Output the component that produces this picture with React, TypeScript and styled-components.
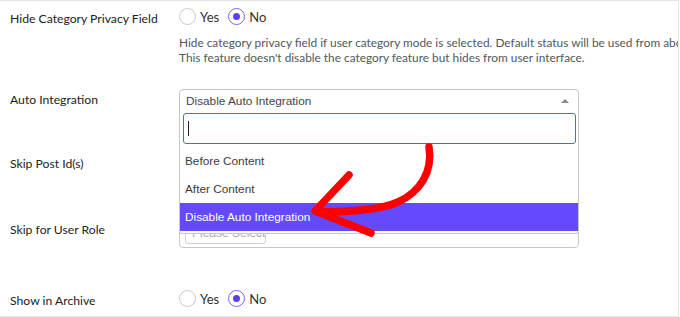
import * as React from 'react';
import styled, { createGlobalStyle } from 'styled-components';

const GlobalStyle = createGlobalStyle`
  html, body {
    margin: 0;
    padding: 0;
    background: #fff;
  }
  * {
    box-sizing: border-box;
  }
`;

const Panel = styled.div`
  position: relative;
  width: 679px;
  overflow: hidden;
  background: #fff;
  border-top: 1px solid #e4e4e4;
  border-right: 1px solid #e4e4e4;
  border-bottom: 1px solid #e4e4e4;
  font-family: Lato, 'Open Sans', sans-serif;
  color: #2c2c2c;
`;

const Row = styled.div<{ $height: number; $top: number }>`
  display: grid;
  grid-template-columns: 169px 1fr;
  align-items: start;
  height: ${(p) => p.$height}px;
  padding: ${(p) => p.$top}px 0 0 10px;
`;

const Label = styled.div<{ $offset?: number }>`
  font-size: 12.2px;
  line-height: 22px;
  padding-top: ${(p) => p.$offset || 0}px;
  color: #222;
  white-space: nowrap;
`;

const Field = styled.div`
  position: relative;
  width: 400px;
`;

const RadioGroup = styled.div`
  display: flex;
  align-items: center;
  gap: 4px;
  height: 17px;
  font-size: 13px;
  color: #333;
`;

const RadioOption = styled.label`
  display: flex;
  align-items: center;
  gap: 4px;
  margin-right: 5px;
`;

const RadioCircle = styled.span<{ $checked?: boolean }>`
  display: inline-flex;
  align-items: center;
  justify-content: center;
  width: 17px;
  height: 17px;
  border-radius: 50%;
  border: 1px solid ${(p) => (p.$checked ? '#7b63f5' : '#c9c9c9')};
  background: #fff;

  &::after {
    content: '';
    display: ${(p) => (p.$checked ? 'block' : 'none')};
    width: 7px;
    height: 7px;
    border-radius: 50%;
    background: #5b3ff0;
  }
`;

const Description = styled.p`
  margin: 10px 0 0;
  width: 500px;
  font-size: 11.85px;
  line-height: 15px;
  color: #50575e;
  white-space: nowrap;
`;

const SelectBox = styled.div`
  display: flex;
  align-items: center;
  justify-content: space-between;
  width: 400px;
  height: 23px;
  padding: 0 9px 0 6px;
  border: 1px solid #c4c4c4;
  border-radius: 4px 4px 0 0;
  font-family: 'Liberation Sans', Arial, sans-serif;
  font-size: 11.8px;
  color: #444;
`;

const Caret = styled.span`
  width: 0;
  height: 0;
  border-left: 4px solid transparent;
  border-right: 4px solid transparent;
  border-bottom: 4px solid #888;
`;

const Dropdown = styled.div`
  position: absolute;
  top: 22px;
  left: 0;
  width: 400px;
  z-index: 5;
  background: #fff;
  border: 1px solid #c8c8c8;
  border-top: none;
  border-radius: 0 0 3px 3px;
  font-family: 'Liberation Sans', Arial, sans-serif;
  font-size: 11.8px;
`;

const SearchWrap = styled.div`
  padding: 2px 2px 3px 3px;
`;

const SearchInput = styled.div`
  display: flex;
  align-items: center;
  height: 31px;
  padding-left: 4px;
  border: 1px solid #4a74aa;
  border-radius: 3px;

  &::before {
    content: '';
    width: 1px;
    height: 15px;
    background: #222;
  }
`;

const Option = styled.div<{ $active?: boolean }>`
  height: 28px;
  line-height: 28px;
  padding-left: 5px;
  color: ${(p) => (p.$active ? '#fff' : '#3c3c3c')};
  background: ${(p) => (p.$active ? '#6549fd' : 'transparent')};
  margin-bottom: ${(p) => (p.$active ? '2px' : '0')};
`;

const TextInput = styled.div`
  width: 400px;
  height: 23px;
  border: 1px solid #c4c4c4;
  border-radius: 4px;
`;

const MultiSelect = styled.div`
  width: 400px;
  height: 31px;
  padding: 5px;
  border: 1px solid #c8c8c8;
  border-radius: 4px;
`;

const PlaceholderBox = styled.div`
  width: 81px;
  height: 21px;
  padding-left: 6px;
  line-height: 19px;
  border: 1px solid #d0d0d0;
  border-radius: 3px;
  font-family: 'Liberation Sans', Arial, sans-serif;
  font-size: 12px;
  color: #aaa;
  white-space: nowrap;
  overflow: hidden;
`;

const Annotation = styled.svg`
  position: absolute;
  top: -1px;
  left: 0;
  width: 680px;
  height: 317px;
  z-index: 10;
  pointer-events: none;
`;

function Radios({ value }: { value: 'yes' | 'no' }) {
  return (
    <RadioGroup>
      <RadioOption>
        <RadioCircle $checked={value === 'yes'} />
        Yes
      </RadioOption>
      <RadioOption>
        <RadioCircle $checked={value === 'no'} />
        No
      </RadioOption>
    </RadioGroup>
  );
}

export default function App() {
  return (
    <>
      <GlobalStyle />
      <Panel>
        <Row $height={80} $top={7}>
          <Label>Hide Category Privacy Field</Label>
          <Field>
            <Radios value="no" />
            <Description>
              Hide category privacy field if user category mode is selected. Default status will be used from abo
              <br />
              This feature doesn't disable the category feature but hides from user interface.
            </Description>
          </Field>
        </Row>

        <Row $height={52} $top={8}>
          <Label>Auto Integration</Label>
          <Field>
            <SelectBox>
              Disable Auto Integration
              <Caret />
            </SelectBox>
            <Dropdown>
              <SearchWrap>
                <SearchInput />
              </SearchWrap>
              <Option>Before Content</Option>
              <Option>After Content</Option>
              <Option $active>Disable Auto Integration</Option>
            </Dropdown>
          </Field>
        </Row>

        <Row $height={50} $top={20}>
          <Label>Skip Post Id(s)</Label>
          <Field>
            <TextInput />
          </Field>
        </Row>

        <Row $height={80} $top={34}>
          <Label $offset={2}>Skip for User Role</Label>
          <Field>
            <MultiSelect>
              <PlaceholderBox>Please Select</PlaceholderBox>
            </MultiSelect>
          </Field>
        </Row>

        <Row $height={53} $top={27}>
          <Label $offset={-1}>Show in Archive</Label>
          <Field>
            <Radios value="no" />
          </Field>
        </Row>

        <Annotation viewBox="0 0 680 317">
          <path
            d="M429 147 C433 172 420 192 398 202 C380 210 352 212 318 212"
            fill="none"
            stroke="#ff0000"
            strokeWidth="7.5"
            strokeLinecap="round"
          />
          <path
            d="M349 175 L315 211 L371 233"
            fill="none"
            stroke="#ff0000"
            strokeWidth="7.5"
            strokeLinecap="round"
            strokeLinejoin="round"
          />
        </Annotation>
      </Panel>
    </>
  );
}
